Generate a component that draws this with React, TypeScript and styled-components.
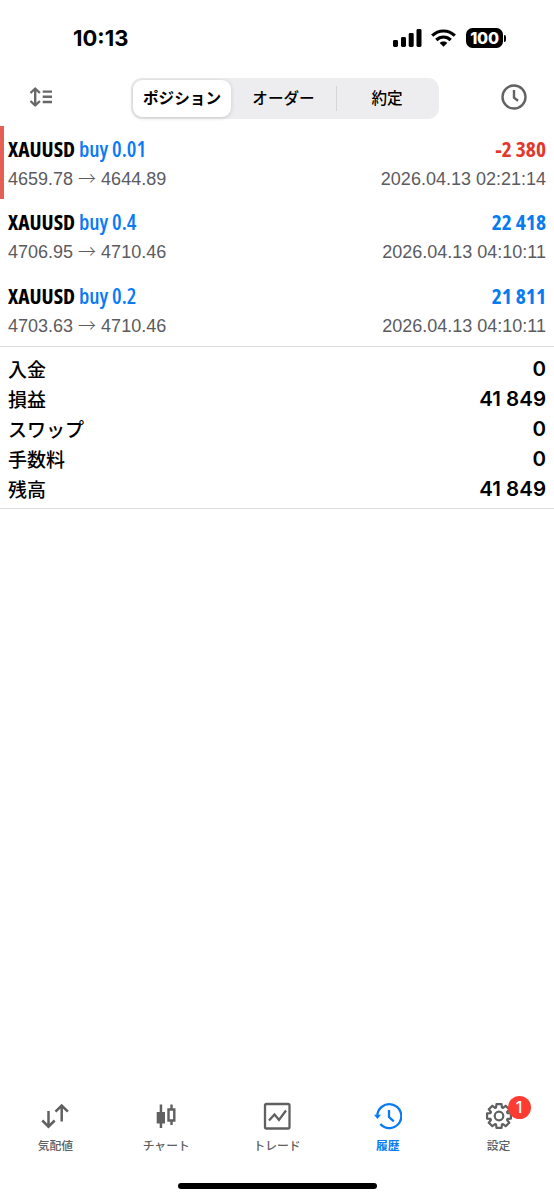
import React from 'react';
import styled, { createGlobalStyle } from 'styled-components';

const GlobalStyle = createGlobalStyle`
  * { box-sizing: border-box; }
  body {
    margin: 0;
    background: #fff;
    color: #000;
    font-family: Inter, "Noto Sans CJK JP", sans-serif;
  }
`;

const Screen = styled.div`
  width: 554px;
  height: 1200px;
  display: flex;
  flex-direction: column;
  background: #fff;
  overflow: hidden;
`;

const StatusBar = styled.header`
  height: 76px;
  padding: 0 48px 0 73px;
  display: flex;
  align-items: center;
  justify-content: space-between;
`;

const Time = styled.span`
  font-size: 22px;
  font-weight: 700;
  line-height: 26px;
  letter-spacing: 0;
`;

const StatusIcons = styled.div`
  display: flex;
  align-items: center;
  gap: 9px;
`;

const Battery = styled.div`
  display: flex;
  align-items: center;
  gap: 1px;
  margin-left: 1px;
`;

const BatteryBody = styled.span`
  width: 37px;
  height: 20px;
  border-radius: 6.5px;
  background: #000;
  color: #fff;
  font-size: 16px;
  font-weight: 800;
  line-height: 20px;
  letter-spacing: -0.2px;
  text-align: center;
`;

const BatteryTip = styled.span`
  width: 2px;
  height: 7px;
  border-radius: 0 2px 2px 0;
  background: #000;
`;

const Toolbar = styled.div`
  height: 50px;
  padding: 2px 27px 0 28px;
  display: flex;
  align-items: flex-start;
  justify-content: space-between;
`;

const IconButton = styled.button`
  width: 26px;
  height: 38px;
  padding: 0;
  border: 0;
  background: none;
  display: flex;
  align-items: center;
  justify-content: center;
`;

const Segments = styled.div`
  width: 308px;
  height: 41px;
  margin-left: 15px;
  margin-right: 0;
  padding: 2px;
  border-radius: 11px;
  background: #ededef;
  display: grid;
  grid-template-columns: 98px 106px 100px;
  align-items: center;
`;

const Segment = styled.button<{ $active?: boolean; $divided?: boolean }>`
  height: ${p => (p.$divided ? '25px' : '37px')};
  padding: 0;
  border: 0;
  border-right: ${p => (p.$divided ? '1px solid #d5d5d8' : '0')};
  border-radius: ${p => (p.$active ? '9px' : '0')};
  background: ${p => (p.$active ? '#fff' : 'transparent')};
  box-shadow: ${p => (p.$active ? '0 1px 4px rgba(0,0,0,.16)' : 'none')};
  color: #000;
  font: ${p => (p.$active ? 600 : 500)} 15.6px/24px Inter, "Noto Sans CJK JP", sans-serif;
`;

const Deals = styled.section`
  height: 221px;
  border-bottom: 1px solid #dedee0;
`;

const Deal = styled.article<{ $loss?: boolean }>`
  height: 73.3px;
  padding: 8px 8px 0 ${p => (p.$loss ? '4px' : '8px')};
  border-left: ${p => (p.$loss ? '4px solid #e65f54' : '0')};
`;

const Line = styled.div`
  display: flex;
  justify-content: space-between;
  white-space: pre;
`;

const Condensed = styled.span<{ $tone?: 'red' | 'blue'; $end?: boolean }>`
  font-family: "Open Sans", sans-serif;
  font-size: 21.5px;
  font-weight: 700;
  font-stretch: 75%;
  line-height: 30px;
  color: ${p => (p.$tone === 'red' ? '#e4372a' : p.$tone === 'blue' ? '#087bf0' : '#000')};
`;

const Volume = styled.span`
  font-weight: 600;
  color: #087bf5;
`;

const Detail = styled.span`
  font-family: "Liberation Sans", Arial, sans-serif;
  font-size: 18px;
  line-height: 30px;
  color: #5b5b60;
`;

const Arrow = styled.span`
  font-family: "Noto Sans CJK JP", sans-serif;
  font-weight: 300;
  line-height: 20px;
`;

const Totals = styled.section`
  height: 162px;
  padding: 6px 8px 0;
  border-bottom: 1px solid #dedee0;
`;

const Total = styled.div`
  height: 30px;
  display: flex;
  justify-content: space-between;
  align-items: center;
  font-size: 20.5px;
  font-weight: 600;
`;

const TotalName = styled.span`
  font-size: 19px;
  font-weight: 500;
  font-family: "Noto Sans CJK JP", sans-serif;
`;

const TabBar = styled.nav`
  height: 84px;
  margin-top: auto;
  display: grid;
  grid-template-columns: repeat(5, 1fr);
`;

const Tab = styled.a<{ $active?: boolean }>`
  display: flex;
  flex-direction: column;
  align-items: center;
  color: ${p => (p.$active ? '#087bf5' : '#606062')};
  font-size: 11.8px;
  font-weight: ${p => (p.$active ? 700 : 500)};
  line-height: 18px;
`;

const TabIcon = styled.span`
  position: relative;
  height: 34px;
  margin-bottom: 4px;
  display: flex;
  align-items: center;
`;

const Badge = styled.span`
  position: absolute;
  left: 23px;
  top: -3px;
  width: 23px;
  height: 23px;
  border-radius: 50%;
  background: #fc3b31;
  color: #fff;
  font-size: 16px;
  font-weight: 500;
  line-height: 23px;
  text-align: center;
`;

const HomeArea = styled.footer`
  height: 17px;
  display: flex;
  justify-content: center;
`;

const HomeIndicator = styled.div`
  width: 199px;
  height: 6px;
  border-radius: 3px;
  background: #000;
`;

const SignalIcon = () => (
  <svg width="29" height="18" viewBox="0 0 29 18">
    <rect x="0" y="11" width="5" height="7" rx="1.4" />
    <rect x="8" y="8" width="5" height="10" rx="1.4" />
    <rect x="15.7" y="4" width="5" height="14" rx="1.4" />
    <rect x="23.5" y="0" width="5" height="18" rx="1.4" />
  </svg>
);

const WifiIcon = () => (
  <svg width="25" height="18" viewBox="0 0 25 18" fill="none" stroke="#000" strokeWidth="3.2">
    <path d="M1.2 6.7C7.5 .4 17.500 .4 23.800 6.700" />
    <path d="M5.300 11C9.300 7 15.700 7 19.700 11" />
    <path d="M12.500 17.800 8.700 13.900C10.800 12 14.200 12 16.300 13.900Z" fill="#000" stroke="none" />
  </svg>
);

const SortIcon = () => (
  <svg width="24" height="20" viewBox="0 0 24 20" fill="none" stroke="#68686a" strokeWidth="2.4">
    <path d="M6.200 2V18M1.500 6 6.200 1.500 10.900 6M1.500 14 6.200 18.500 10.900 14" strokeLinejoin="round" />
    <path d="M13.700 4.600H23M13.700 9.800H23M13.700 15H23" />
  </svg>
);

const ClockIcon = () => (
  <svg width="26" height="26" viewBox="0 0 26 26" fill="none" stroke="#626264" strokeWidth="2.4">
    <circle cx="13" cy="13" r="11.500" />
    <path d="M13 6V13.700L17 16.800" />
  </svg>
);

const QuotesIcon = () => (
  <svg width="28" height="28" viewBox="0 0 28 28" fill="none" stroke="#606062" strokeWidth="2.500">
    <path d="M7.500 9V25M1.300 18.500 7.500 24.700 13.700 18.500M20.700 19.500V3.500M14.500 9.700 20.700 3.500 26.900 9.700" />
  </svg>
);

const CandlesIcon = () => (
  <svg width="20" height="28" viewBox="0 0 20 28">
    <path d="M3.700 2.500H6.200V10H9V21.500H6.200V26H3.700V21.500H.700V10H3.700Z" fill="#606062" />
    <path d="M15.500 2.500V7M15.500 19V23M12.500 7.500H18.300V18.500H12.500Z" fill="none" stroke="#606062" strokeWidth="2.400" />
  </svg>
);

const TradeIcon = () => (
  <svg width="28" height="28" viewBox="0 0 28 28" fill="none" stroke="#606062" strokeWidth="2.300">
    <rect x="2" y="2" width="24.500" height="24.500" rx="1.500" />
    <path d="M6 18.500 11.500 12.500 16 18 23 8.500" />
  </svg>
);

const HistoryIcon = () => (
  <svg width="28" height="28" viewBox="0 0 28 28" fill="none" stroke="#087bf5" strokeWidth="2.300">
    <path d="M3.300 14.500A12 12 0 1 1 6.300 22.100" />
    <path d="M0 12.700H7L3.500 17Z" fill="#087bf5" stroke="none" />
    <path d="M15 8V15L19.800 19.300" />
  </svg>
);

const teeth = Array.from({ length: 8 }, (_, i) => {
  const at = (r: number, deg: number) => {
    const a = ((i * 45 + deg) * Math.PI) / 180;
    return `${(14 + r * Math.sin(a)).toFixed(2)} ${(14 - r * Math.cos(a)).toFixed(2)}`;
  };
  return `${at(9, -19)} L${at(12.2, -12)} L${at(12.2, 12)} L${at(9, 19)}`;
}).join(' L');

const SettingsIcon = () => (
  <svg width="28" height="28" viewBox="0 0 28 28" fill="none" stroke="#606062" strokeWidth="2.200" strokeLinejoin="round">
    <path d={`M${teeth}Z`} />
    <circle cx="14" cy="14" r="4.300" />
  </svg>
);

const deals = [
  { volume: 'buy 0.01', prices: ['4659.78', '4644.89'], profit: '-2 380', date: '2026.04.13 02:21:14', loss: true },
  { volume: 'buy 0.4', prices: ['4706.95', '4710.46'], profit: '22 418', date: '2026.04.13 04:10:11', loss: false },
  { volume: 'buy 0.2', prices: ['4703.63', '4710.46'], profit: '21 811', date: '2026.04.13 04:10:11', loss: false },
];

const totals = [
  ['入金', '0'],
  ['損益', '41 849'],
  ['スワップ', '0'],
  ['手数料', '0'],
  ['残高', '41 849'],
];

const tabs = [
  { label: '気配値', Icon: QuotesIcon },
  { label: 'チャート', Icon: CandlesIcon },
  { label: 'トレード', Icon: TradeIcon },
  { label: '履歴', Icon: HistoryIcon, active: true },
  { label: '設定', Icon: SettingsIcon, badge: '1' },
];

export default function App() {
  return (
    <Screen>
      <GlobalStyle />
      <StatusBar>
        <Time>10:13</Time>
        <StatusIcons>
          <SignalIcon />
          <WifiIcon />
          <Battery>
            <BatteryBody>100</BatteryBody>
            <BatteryTip />
          </Battery>
        </StatusIcons>
      </StatusBar>
      <Toolbar>
        <IconButton aria-label="sort"><SortIcon /></IconButton>
        <Segments>
          <Segment $active>ポジション</Segment>
          <Segment $divided>オーダー</Segment>
          <Segment>約定</Segment>
        </Segments>
        <IconButton aria-label="period"><ClockIcon /></IconButton>
      </Toolbar>
      <Deals>
        {deals.map(d => (
          <Deal key={d.profit} $loss={d.loss}>
            <Line>
              <Condensed>XAUUSD <Volume>{d.volume}</Volume></Condensed>
              <Condensed $tone={d.loss ? 'red' : 'blue'} $end>{d.profit}</Condensed>
            </Line>
            <Line>
              <Detail>{d.prices[0]} <Arrow>→</Arrow> {d.prices[1]}</Detail>
              <Detail>{d.date}</Detail>
            </Line>
          </Deal>
        ))}
      </Deals>
      <Totals>
        {totals.map(([name, value]) => (
          <Total key={name}>
            <TotalName>{name}</TotalName>
            <span>{value}</span>
          </Total>
        ))}
      </Totals>
      <TabBar>
        {tabs.map(({ label, Icon, active, badge }) => (
          <Tab key={label} $active={active}>
            <TabIcon>
              <Icon />
              {badge && <Badge>{badge}</Badge>}
            </TabIcon>
            {label}
          </Tab>
        ))}
      </TabBar>
      <HomeArea><HomeIndicator /></HomeArea>
    </Screen>
  );
}
